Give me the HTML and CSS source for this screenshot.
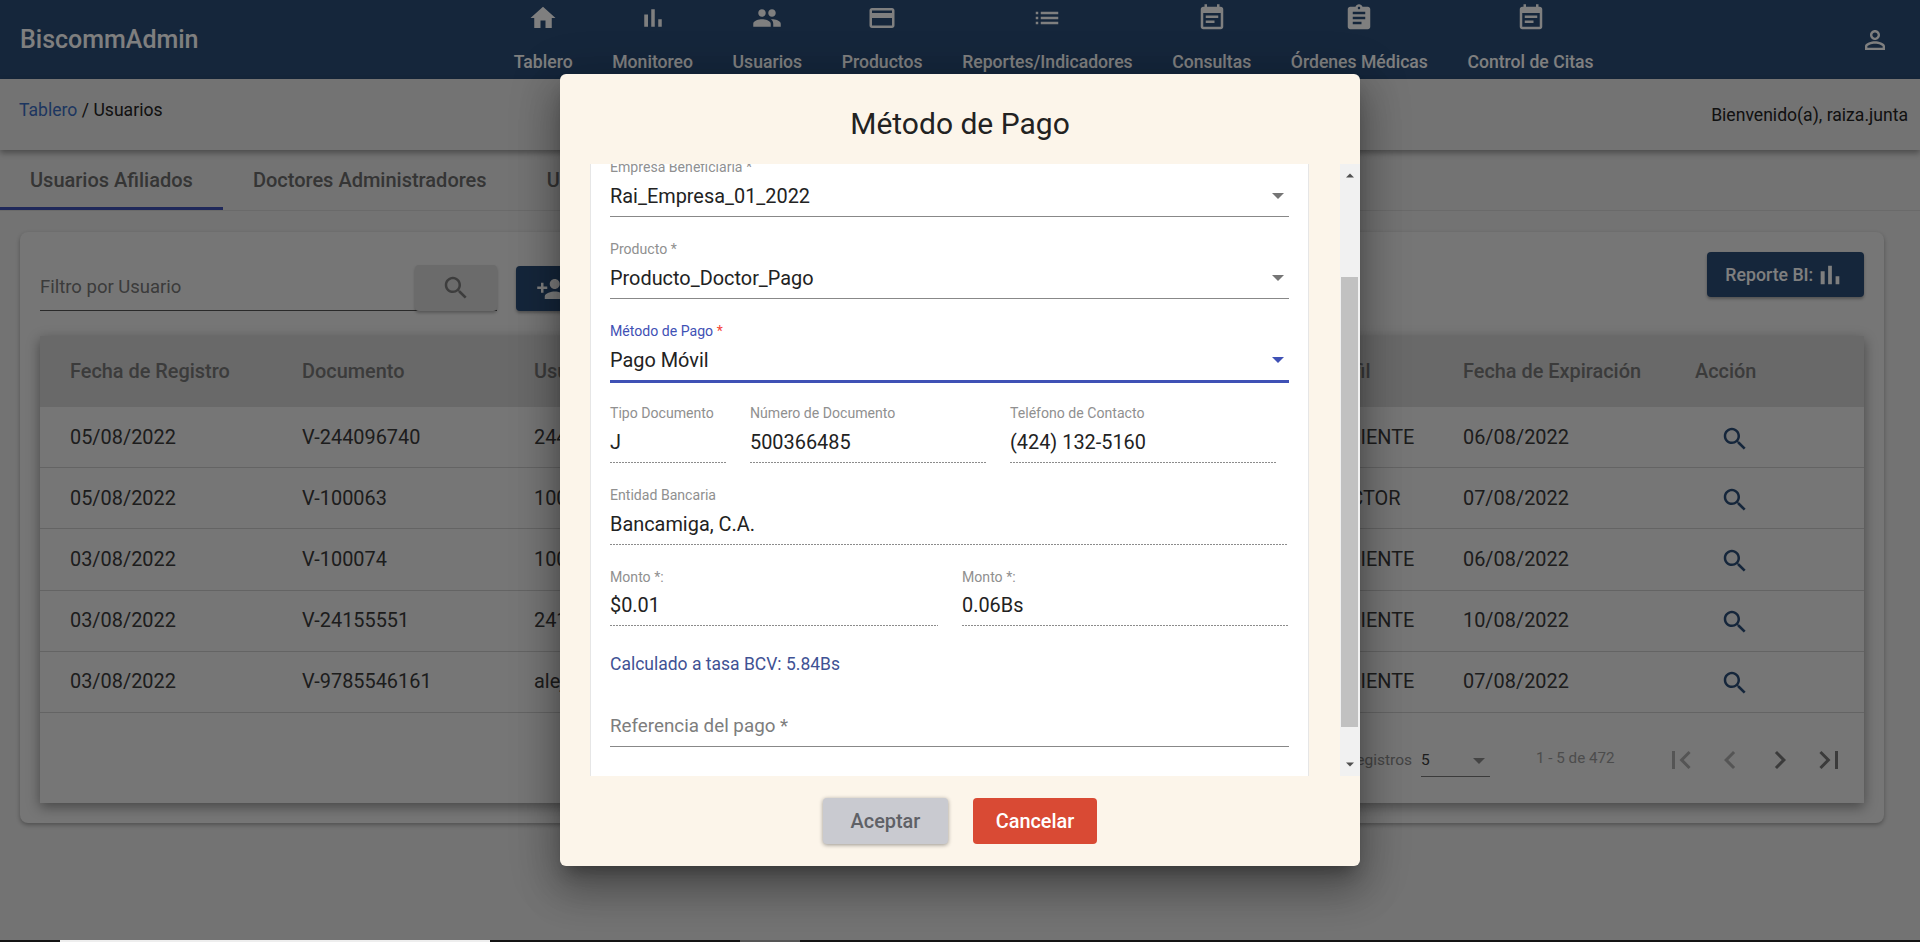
FILE: index.html
```html
<!DOCTYPE html>
<html lang="es">
<head>
<meta charset="utf-8">
<title>BiscommAdmin</title>
<link rel="stylesheet" href="styles.css">
</head>
<body>
<svg class="sprite" width="0" height="0" aria-hidden="true">
  <symbol id="i-home" viewBox="0 0 24 24"><path d="M10 20v-6h4v6h5v-8h3L12 3 2 12h3v8z"/></symbol>
  <symbol id="i-chart" viewBox="0 0 24 24"><path d="M5 9.2h3V19H5zM10.6 5h2.8v14h-2.8zm5.6 8H19v6h-2.8z"/></symbol>
  <symbol id="i-people" viewBox="0 0 24 24"><path d="M16 11c1.66 0 2.99-1.34 2.99-3S17.66 5 16 5c-1.66 0-3 1.34-3 3s1.34 3 3 3zm-8 0c1.66 0 2.99-1.34 2.99-3S9.66 5 8 5C6.34 5 5 6.34 5 8s1.34 3 3 3zm0 2c-2.33 0-7 1.17-7 3.5V19h14v-2.5c0-2.33-4.67-3.5-7-3.5zm8 0c-.29 0-.62.02-.97.05 1.16.84 1.97 1.97 1.97 3.45V19h6v-2.5c0-2.33-4.67-3.5-7-3.5z"/></symbol>
  <symbol id="i-card" viewBox="0 0 24 24"><path d="M20 4H4c-1.11 0-1.99.89-1.99 2L2 18c0 1.11.89 2 2 2h16c1.11 0 2-.89 2-2V6c0-1.11-.89-2-2-2zm0 14H4v-6h16v6zm0-10H4V6h16v2z"/></symbol>
  <symbol id="i-list" viewBox="0 0 24 24"><path d="M3 13h2v-2H3v2zm0 4h2v-2H3v2zm0-8h2V7H3v2zm4 4h14v-2H7v2zm0 4h14v-2H7v2zM7 7v2h14V7H7z"/></symbol>
  <symbol id="i-event" viewBox="0 0 24 24"><path d="M17 10H7v2h10v-2zm2-7h-1V1h-2v2H8V1H6v2H5c-1.11 0-1.99.9-1.99 2L3 19c0 1.1.89 2 2 2h14c1.1 0 2-.9 2-2V5c0-1.1-.9-2-2-2zm0 16H5V8h14v11zm-5-5H7v2h7v-2z"/></symbol>
  <symbol id="i-assign" viewBox="0 0 24 24"><path d="M19 3h-4.18C14.4 1.84 13.3 1 12 1c-1.3 0-2.4.84-2.82 2H5c-1.1 0-2 .9-2 2v14c0 1.1.9 2 2 2h14c1.1 0 2-.9 2-2V5c0-1.1-.9-2-2-2zm-7 0c.55 0 1 .45 1 1s-.45 1-1 1-1-.45-1-1 .45-1 1-1zm2 14H7v-2h7v2zm3-4H7v-2h10v2zm0-4H7V7h10v2z"/></symbol>
  <symbol id="i-person" viewBox="0 0 24 24"><path d="M12 5.9c1.16 0 2.1.94 2.1 2.1s-.94 2.1-2.1 2.1S9.9 9.16 9.9 8s.94-2.1 2.1-2.1m0 9c2.97 0 6.1 1.46 6.1 2.1v1.1H5.9V17c0-.64 3.13-2.1 6.1-2.1M12 4C9.79 4 8 5.79 8 8s1.79 4 4 4 4-1.79 4-4-1.79-4-4-4zm0 9c-2.67 0-8 1.34-8 4v3h16v-3c0-2.66-5.33-4-8-4z"/></symbol>
  <symbol id="i-search" viewBox="0 0 24 24"><path d="M15.5 14h-.79l-.28-.27C15.41 12.59 16 11.11 16 9.5 16 5.91 13.09 3 9.5 3S3 5.91 3 9.5 5.91 16 9.5 16c1.61 0 3.09-.59 4.23-1.57l.27.28v.79l5 4.99L20.49 19l-4.99-5zm-6 0C7.01 14 5 11.99 5 9.5S7.01 5 9.5 5 14 7.01 14 9.5 11.99 14 9.5 14z"/></symbol>
  <symbol id="i-add" viewBox="0 0 24 24"><path d="M15 12c2.21 0 4-1.79 4-4s-1.79-4-4-4-4 1.79-4 4 1.79 4 4 4zm-9-2V7H4v3H1v2h3v3h2v-3h3v-2H6zm9 4c-2.67 0-8 1.34-8 4v2h16v-2c0-2.66-5.33-4-8-4z"/></symbol>
  <symbol id="i-first" viewBox="0 0 24 24"><path d="M18.41 16.59L13.82 12l4.59-4.59L17 6l-6 6 6 6zM6 6h2v12H6z"/></symbol>
  <symbol id="i-prev" viewBox="0 0 24 24"><path d="M15.41 7.41L14 6l-6 6 6 6 1.41-1.41L10.83 12z"/></symbol>
  <symbol id="i-next" viewBox="0 0 24 24"><path d="M10 6L8.59 7.41 13.17 12l-4.58 4.59L10 18l6-6z"/></symbol>
  <symbol id="i-last" viewBox="0 0 24 24"><path d="M5.59 7.41L10.18 12l-4.59 4.59L7 18l6-6-6-6zM16 6h2v12h-2z"/></symbol>
  <symbol id="i-drop" viewBox="0 0 10 5"><path d="M0 0l5 5 5-5z"/></symbol>
</svg>

<div class="screen">
  <header class="topbar">
    <div class="brand">BiscommAdmin</div>
    <nav class="nav">
      <a class="nav-item"><svg class="nav-icon"><use href="#i-home"/></svg><span>Tablero</span></a>
      <a class="nav-item"><svg class="nav-icon"><use href="#i-chart"/></svg><span>Monitoreo</span></a>
      <a class="nav-item"><svg class="nav-icon"><use href="#i-people"/></svg><span>Usuarios</span></a>
      <a class="nav-item"><svg class="nav-icon"><use href="#i-card"/></svg><span>Productos</span></a>
      <a class="nav-item"><svg class="nav-icon"><use href="#i-list"/></svg><span>Reportes/Indicadores</span></a>
      <a class="nav-item"><svg class="nav-icon"><use href="#i-event"/></svg><span>Consultas</span></a>
      <a class="nav-item"><svg class="nav-icon"><use href="#i-assign"/></svg><span>Órdenes Médicas</span></a>
      <a class="nav-item"><svg class="nav-icon"><use href="#i-event"/></svg><span>Control de Citas</span></a>
    </nav>
    <svg class="nav-icon account"><use href="#i-person"/></svg>
  </header>

  <div class="crumbs">
    <div class="crumb-path"><a class="crumb-link">Tablero</a> / Usuarios</div>
    <div class="crumb-welcome">Bienvenido(a), raiza.junta</div>
  </div>

  <div class="tabs">
    <div class="tab tab-active">Usuarios Afiliados</div>
    <div class="tab">Doctores Administradores</div>
    <div class="tab">Usuarios</div>
  </div>

  <main class="content">
    <section class="card">
      <div class="toolbar">
        <div class="filter">
          <span class="filter-text">Filtro por Usuario</span>
          <button class="btn-search"><svg class="icon-md"><use href="#i-search"/></svg></button>
        </div>
        <button class="btn-dark btn-add"><svg class="icon-md"><use href="#i-add"/></svg></button>
        <button class="btn-dark btn-report">Reporte BI: <svg class="icon-report"><use href="#i-chart"/></svg></button>
      </div>

      <div class="table">
        <div class="tr th">
          <div>Fecha de Registro</div><div>Documento</div><div>Usuario</div><div>Perfil</div><div>Fecha de Expiración</div><div>Acción</div>
        </div>
        <div class="tr">
          <div>05/08/2022</div><div>V-244096740</div><div>244096740</div><div>PACIENTE</div><div>06/08/2022</div><div><svg class="icon-action"><use href="#i-search"/></svg></div>
        </div>
        <div class="tr">
          <div>05/08/2022</div><div>V-100063</div><div>100063</div><div>DOCTOR</div><div>07/08/2022</div><div><svg class="icon-action"><use href="#i-search"/></svg></div>
        </div>
        <div class="tr">
          <div>03/08/2022</div><div>V-100074</div><div>100074</div><div>PACIENTE</div><div>06/08/2022</div><div><svg class="icon-action"><use href="#i-search"/></svg></div>
        </div>
        <div class="tr">
          <div>03/08/2022</div><div>V-24155551</div><div>24155551</div><div>PACIENTE</div><div>10/08/2022</div><div><svg class="icon-action"><use href="#i-search"/></svg></div>
        </div>
        <div class="tr">
          <div>03/08/2022</div><div>V-9785546161</div><div>alejandro</div><div>PACIENTE</div><div>07/08/2022</div><div><svg class="icon-action"><use href="#i-search"/></svg></div>
        </div>
        <div class="pager">
          <span class="pager-label">Registros</span>
          <div class="pager-select"><span>5</span><svg class="drop-sm"><use href="#i-drop"/></svg></div>
          <span class="pager-range">1 - 5 de 472</span>
          <div class="pager-buttons">
            <svg class="pager-icon off"><use href="#i-first"/></svg>
            <svg class="pager-icon off"><use href="#i-prev"/></svg>
            <svg class="pager-icon"><use href="#i-next"/></svg>
            <svg class="pager-icon"><use href="#i-last"/></svg>
          </div>
        </div>
      </div>
    </section>
  </main>

  <div class="backdrop">
    <div class="modal" role="dialog">
      <h2 class="modal-title">Método de Pago</h2>
      <div class="modal-body">
        <div class="panel">
          <form class="form">
            <div class="field">
              <label class="label">Empresa Beneficiaria *</label>
              <div class="value select"><span>Rai_Empresa_01_2022</span><svg class="drop"><use href="#i-drop"/></svg></div>
            </div>
            <div class="field">
              <label class="label">Producto *</label>
              <div class="value select"><span>Producto_Doctor_Pago</span><svg class="drop"><use href="#i-drop"/></svg></div>
            </div>
            <div class="field field-focus">
              <label class="label">Método de Pago <em class="req">*</em></label>
              <div class="value select"><span>Pago Móvil</span><svg class="drop"><use href="#i-drop"/></svg></div>
            </div>
            <div class="row row-doc">
              <div class="field"><label class="label">Tipo Documento</label><div class="value dotted">J</div></div>
              <div class="field"><label class="label">Número de Documento</label><div class="value dotted">500366485</div></div>
              <div class="field"><label class="label">Teléfono de Contacto</label><div class="value dotted">(424) 132-5160</div></div>
            </div>
            <div class="field field-bank">
              <label class="label">Entidad Bancaria</label>
              <div class="value dotted">Bancamiga, C.A.</div>
            </div>
            <div class="row row-amount">
              <div class="field"><label class="label">Monto *:</label><div class="value dotted">$0.01</div></div>
              <div class="field"><label class="label">Monto *:</label><div class="value dotted">0.06Bs</div></div>
            </div>
            <p class="rate">Calculado a tasa BCV: 5.84Bs</p>
            <div class="value placeholder">Referencia del pago *</div>
          </form>
        </div>
        <div class="scrollbar">
          <svg class="scroll-arrow"><use href="#i-drop"/></svg>
          <div class="scroll-thumb"></div>
          <svg class="scroll-arrow scroll-down"><use href="#i-drop"/></svg>
        </div>
      </div>
      <div class="modal-actions">
        <button class="btn-accept">Aceptar</button>
        <button class="btn-cancel">Cancelar</button>
      </div>
    </div>
  </div>
</div>

<div class="strip"><span class="strip-a"></span><span class="strip-b"></span></div>
</body>
</html>
```

FILE: styles.css
```css
* { box-sizing: border-box; }
html, body { margin: 0; padding: 0; height: 942px; overflow: hidden; }
body { font-family: Roboto, "Liberation Sans", sans-serif; font-size: 19.6px; color: #222; background: #e6e6e6; }
.sprite { position: absolute; }
svg { fill: currentColor; display: block; }
button { font-family: inherit; border: 0; padding: 0; }

.screen { position: relative; height: 940px; display: flex; flex-direction: column; overflow: hidden; }

/* top bar */
.topbar { height: 79px; flex: none; display: flex; align-items: flex-start; background: #2a4c76; color: #fff; padding: 0 30px 0 20px; }
.brand { width: 474px; flex: none; font-size: 25px; font-weight: 500; line-height: 79px; }
.nav { display: flex; }
.nav-item { display: flex; flex-direction: column; align-items: center; padding: 3px 19.8px 0; font-size: 17.6px; font-weight: 500; }
.nav-item span { line-height: 20px; margin-top: 18.5px; white-space: nowrap; }
.nav-icon { width: 30px; height: 30px; }
.account { margin: 25px 0 0 auto; }

/* breadcrumb */
.crumbs { height: 71px; flex: none; display: flex; justify-content: space-between; padding: 0 12px 0 19px; font-size: 17.6px; background: #e6e6e6; box-shadow: 0 3px 6px rgba(0,0,0,.35); position: relative; }
.crumb-path { line-height: 63px; }
.crumb-welcome { line-height: 72px; }
.crumb-link { color: #3a6cc0; }

/* tabs */
.tabs { height: 61px; flex: none; display: flex; border-bottom: 1px solid #d4d4d4; }
.tab { padding: 0 30px; line-height: 61px; font-size: 20px; font-weight: 500; color: #6a6a6a; white-space: nowrap; }
.tab-active { border-bottom: 3px solid #3f51b5; height: 60px; }

/* content */
.content { padding: 21px 36px 0 20px; }
.card { height: 591px; padding: 0 20px; background: #ececec; border-radius: 8px; box-shadow: 0 2px 4px rgba(0,0,0,.3); }
.toolbar { height: 104px; display: flex; align-items: flex-start; }
.filter { width: 457px; height: 46px; margin-top: 33px; display: flex; justify-content: space-between; border-bottom: 1px solid #555; }
.filter-text { line-height: 44px; font-size: 18.5px; color: #777; }
.btn-search { width: 82px; height: 46px; background: #d6d6d6; border-radius: 4px; color: #7a7a7a; display: flex; align-items: center; justify-content: center; box-shadow: 0 2px 3px rgba(0,0,0,.25); }
.btn-dark { height: 45px; background: #2a4c76; color: #fff; border-radius: 4px; display: flex; align-items: center; justify-content: center; box-shadow: 0 2px 3px rgba(0,0,0,.3); font-size: 17.7px; font-weight: 500; white-space: pre; }
.btn-add { width: 170px; margin: 34px 0 0 19px; justify-content: flex-start; padding-left: 20px; }
.btn-report { width: 157px; margin: 20px 0 0 auto; }
.icon-md { width: 30px; height: 30px; }
.icon-report { width: 32px; height: 32px; margin-left: -4px; }

/* table */
.table { height: 467px; background: #ececec; box-shadow: 0 4px 12px rgba(0,0,0,.4); }
.tr { display: grid; grid-template-columns: 232px 232px 789.5px 139.5px 232px 1fr; height: 61.2px; padding-left: 30px; align-items: center; border-bottom: 1px solid #c8c8c8; color: #3a3a3a; font-size: 19.9px; white-space: nowrap; }
.th { height: 71px; background: #d2d2d2; border-bottom: 0; font-weight: 500; font-size: 19.9px; color: #777; }
.icon-action { width: 30px; height: 30px; margin: 3px 0 0 25px; color: #2a4c76; }

/* pager */
.pager { height: 90px; display: flex; align-items: center; justify-content: flex-end; padding-right: 10px; font-size: 14.7px; }
.pager-label { color: #888; margin-top: 4px; font-size: 15.5px; }
.pager-select { width: 69px; height: 38px; margin: 0 46px 0 9px; padding-top: 12px; display: flex; justify-content: space-between; border-bottom: 1px solid #777; color: #3a3a3a; font-size: 15.5px; }
.drop-sm { width: 12px; height: 6px; margin: 7px 5px 0 0; color: #888; }
.pager-range { color: #999; font-size: 15.2px; width: 120px; margin-top: 0; }
.pager-buttons { display: flex; margin-top: 4px; }
.pager-icon { width: 36px; height: 36px; margin: 0 6.75px; color: #777; }
.pager-icon.off { color: #aaa; }

/* modal */
.backdrop { position: absolute; inset: 0; display: flex; align-items: center; justify-content: center; background: rgba(0,0,0,.5); }
.modal { width: 800px; height: 792px; display: flex; flex-direction: column; background: #fcf5ea; border-radius: 6px; box-shadow: 0 11px 15px -7px rgba(0,0,0,.3), 0 24px 38px 3px rgba(0,0,0,.22), 0 9px 46px 8px rgba(0,0,0,.18); }
.modal-title { margin: 0; height: 90px; flex: none; text-align: center; font-size: 30px; font-weight: 400; line-height: 100px; color: #222; }
.modal-body { height: 612px; flex: none; display: flex; justify-content: space-between; padding-left: 30px; }
.panel { width: 719px; background: #fff; overflow: hidden; border: solid #e6e6e6; border-width: 0 1px; }
.form { margin-top: -5.5px; padding: 0 19px; display: flex; flex-direction: column; gap: 24px; }
.field { display: flex; flex-direction: column; }
.label { height: 17px; font-size: 14.1px; line-height: 17px; color: #909090; }
.value { height: 41px; padding-top: 9.5px; line-height: 24px; font-size: 19.9px; color: #222; border-bottom: 1px solid #888; }
.select { display: flex; justify-content: space-between; }
.drop { width: 12px; height: 6px; margin: 8px 5px 0 0; color: #757575; }
.dotted { border-bottom: 0; background: repeating-linear-gradient(90deg, #8c8c8c 0 2px, transparent 2px 3px) left bottom / 100% 1px no-repeat; }
.field-focus .label { color: #3f51b5; }
.field-focus .value { border-bottom: 1px solid #3f51b5; box-shadow: 0 2px 0 #3f51b5; }
.field-focus .drop { color: #3f51b5; }
.req { font-style: normal; color: #f44336; }
.row { display: grid; }
.row-doc { grid-template-columns: 117px 237px 267px; gap: 23px; }
.field-bank { width: 677px; }
.row-amount { grid-template-columns: 327.5px 327px; gap: 24.5px; }
.row-amount .value { height: 40px; padding-top: 8.5px; }
.rate { margin: 2px 0 0; line-height: 24px; font-size: 17.5px; color: #3f5294; }
.placeholder { height: 34px; padding-top: 1px; margin-top: 13.5px; color: #7d7d7d; font-size: 18.8px; border-bottom: 1px solid #888; }

.scrollbar { width: 20px; display: flex; flex-direction: column; align-items: center; background: #f1f1f1; }
.scroll-arrow { width: 8px; height: 5px; margin-top: 9px; color: #505050; transform: rotate(180deg); flex: none; }
.scroll-thumb { width: 17px; height: 450px; margin: 99px 2px 0 1px; background: #c1c1c1; flex: none; }
.scroll-down { margin-top: auto; margin-bottom: 9px; transform: none; }

.modal-actions { height: 90px; flex: none; display: flex; align-items: center; justify-content: center; gap: 25px; }
.btn-accept, .btn-cancel { height: 46px; font-size: 19.9px; font-weight: 500; border-radius: 4px; }
.btn-accept { width: 125px; background: #c9cad0; color: #5f6166; box-shadow: 0 1px 4px rgba(0,0,0,.4); }
.btn-cancel { width: 124px; background: #d94a34; color: #fff; }

/* bottom strip */
.strip { height: 2px; background: #141414; position: relative; }
.strip-a { position: absolute; left: 60px; width: 430px; top: 0; height: 2px; background: #eee; }
.strip-b { position: absolute; left: 740px; width: 60px; top: 0; height: 2px; background: #555; }
```
